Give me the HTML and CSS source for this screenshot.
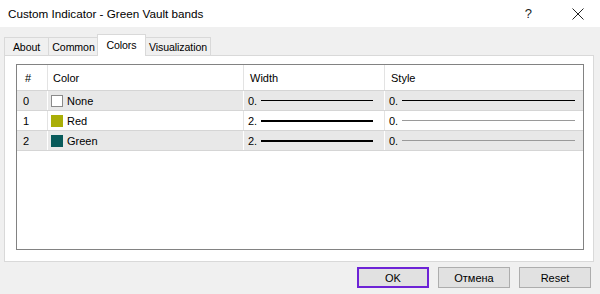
FILE: index.html
```html
<!DOCTYPE html>
<html>
<head>
<meta charset="utf-8">
<link rel="stylesheet" href="styles.css">
</head>
<body>
<div class="dialog">
  <div class="titlebar">
    <span class="title">Custom Indicator - Green Vault bands</span>
    <span class="help">?</span>
    <svg class="close" width="12" height="12" viewBox="0 0 12 12"><path d="M0.5 0.5 L11.5 11.5 M11.5 0.5 L0.5 11.5" stroke="#222" stroke-width="1" fill="none"/></svg>
  </div>
  <div class="tabs">
    <div class="tab t-about">About</div>
    <div class="tab t-common">Common</div>
    <div class="tab t-colors active">Colors</div>
    <div class="tab t-vis">Visualization</div>
  </div>
  <div class="panel">
    <div class="grid">
      <div class="row head">
        <div class="c num">#</div>
        <div class="c color">Color</div>
        <div class="c width">Width</div>
        <div class="c style">Style</div>
      </div>
      <div class="row alt">
        <div class="c num">0</div>
        <div class="c color"><span class="sw none"></span>None</div>
        <div class="c width"><span class="v">0.</span><span class="ln thin"></span></div>
        <div class="c style"><span class="v">0.</span><span class="ln sthin"></span></div>
      </div>
      <div class="row">
        <div class="c num">1</div>
        <div class="c color"><span class="sw red"></span>Red</div>
        <div class="c width"><span class="v">2.</span><span class="ln thick"></span></div>
        <div class="c style"><span class="v">0.</span><span class="ln sgray"></span></div>
      </div>
      <div class="row alt">
        <div class="c num">2</div>
        <div class="c color"><span class="sw green"></span>Green</div>
        <div class="c width"><span class="v">2.</span><span class="ln thick"></span></div>
        <div class="c style"><span class="v">0.</span><span class="ln sgray"></span></div>
      </div>
    </div>
  </div>
  <div class="buttons">
    <div class="btn default">OK</div>
    <div class="btn">Отмена</div>
    <div class="btn">Reset</div>
  </div>
</div>
</body>
</html>
```
FILE: styles.css
```css
html, body {
  margin: 0;
  padding: 0;
}
body {
  width: 600px;
  height: 294px;
  background: #f0f0f0;
  font-family: "Liberation Sans", Arial, sans-serif;
  font-size: 11px;
  color: #000;
  overflow: hidden;
}
.dialog {
  display: flex;
  flex-direction: column;
  height: 294px;
}
.titlebar {
  height: 27px;
  background: #fff;
  display: flex;
  align-items: center;
  padding-left: 8px;
  box-sizing: border-box;
}
.title {
  font-size: 11.7px;
  flex: 1;
  color: #000;
}
.help {
  font-size: 13px;
  margin-right: 40px;
  color: #222;
}
.close {
  margin-right: 16px;
}
.tabs {
  display: flex;
  align-items: flex-end;
  padding-left: 4px;
  margin-top: 7px;
  height: 21px;
  position: relative;
  z-index: 1;
}
.tab {
  height: 18px;
  box-sizing: border-box;
  border: 1px solid #d9d9d9;
  border-bottom: none;
  background: #f0f0f0;
  display: flex;
  align-items: center;
  justify-content: center;
  margin-right: -1px;
  color: #000;
  font-size: 10.6px;
  letter-spacing: -0.1px;
}
.t-about { width: 45px; }
.t-common { width: 51px; }
.t-colors { width: 49px; }
.t-vis { width: 66px; }
.tab.active {
  height: 22px;
  background: #fff;
  margin-bottom: -1px;
  padding-bottom: 2px;
  margin-left: -1px;
  margin-right: -1px;
  position: relative;
}
.panel {
  background: #fff;
  border: 1px solid #d9d9d9;
  margin: 0 6px 0 4px;
  height: 207px;
  box-sizing: border-box;
  padding: 8px 9px 11px 11px;
}
.grid {
  border: 1px solid #828282;
  height: 100%;
  box-sizing: border-box;
}
.row {
  display: grid;
  grid-template-columns: 31px 196px 141px 1fr;
  height: 20px;
  border-bottom: 1px solid #d5d5d5;
  box-sizing: border-box;
}
.row.head {
  height: 26px;
}
.row.alt {
  background: #e8e8e8;
}
.c {
  display: flex;
  align-items: center;
  border-right: 1px solid #e3e3e3;
  padding-left: 6px;
  white-space: nowrap;
  overflow: hidden;
}
.row.alt .c {
  border-right-color: #fff;
}
.c.style {
  border-right: none;
  padding-right: 8px;
}
.c.num {
  padding-left: 6px;
}
.head .c.num {
  padding-left: 8px;
}
.c.width, .c.style {
  padding-left: 4px;
}
.head .c.width, .head .c.style {
  padding-left: 6px;
}
.c.color {
  padding-left: 3px;
}
.head .c.color {
  padding-left: 5px;
}
.sw {
  width: 12px;
  height: 12px;
  box-sizing: border-box;
  margin-right: 4px;
}
.sw.none {
  background: #fff;
  border: 1px solid #8a8a8a;
}
.sw.red {
  background: #a9ae07;
}
.sw.green {
  background: #085a5a;
}
.v {
  width: 13px;
}
.ln {
  display: block;
  height: 1px;
  background: #000;
}
.c.width .ln {
  width: 112px;
}
.c.style .ln {
  flex: 1;
}
.ln.thick {
  height: 2px;
}
.ln.sgray {
  background: #9a9a9a;
}
.buttons {
  display: flex;
  justify-content: flex-end;
  gap: 9px;
  padding: 5px 9px 0 0;
}
.btn {
  width: 72px;
  height: 21px;
  box-sizing: border-box;
  border: 1px solid #adadad;
  background: #e1e1e1;
  display: flex;
  align-items: center;
  justify-content: center;
  color: #000;
}
.btn.default {
  border: 2px solid #6d23d6;
}
```
